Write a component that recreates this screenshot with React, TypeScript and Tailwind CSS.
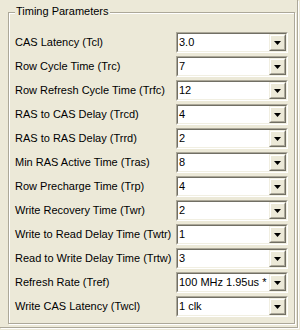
import React from "react";

const rows = [
  { label: "CAS Latency (Tcl)", value: "3.0" },
  { label: "Row Cycle Time (Trc)", value: "7" },
  { label: "Row Refresh Cycle Time (Trfc)", value: "12" },
  { label: "RAS to CAS Delay (Trcd)", value: "4" },
  { label: "RAS to RAS Delay (Trrd)", value: "2" },
  { label: "Min RAS Active Time (Tras)", value: "8" },
  { label: "Row Precharge Time (Trp)", value: "4" },
  { label: "Write Recovery Time (Twr)", value: "2" },
  { label: "Write to Read Delay Time (Twtr)", value: "1" },
  { label: "Read to Write Delay Time (Trtw)", value: "3" },
  { label: "Refresh Rate (Tref)", value: "100 MHz 1.95us *" },
  { label: "Write CAS Latency (Twcl)", value: "1 clk" },
];

const Combo = ({ value }: { value: string }) => {
  return (
    <div className="w-[112px] h-[21px] border border-t-[#aca899] border-l-[#aca899] border-r-white border-b-white">
      <div className="flex h-full border border-t-[#716f64] border-l-[#716f64] border-r-[#f1efe2] border-b-[#f1efe2] bg-white">
        <div className="flex-1 pl-[1px] leading-[17px] whitespace-nowrap overflow-hidden">{value}</div>
        {/* dropdown button */}
        <div className="w-[17px] h-[17px] border border-t-[#f1efe2] border-l-[#f1efe2] border-r-[#716f64] border-b-[#716f64]">
          <div className="flex items-center justify-center h-full border border-t-white border-l-white border-r-[#aca899] border-b-[#aca899] bg-[#ece9d8]">
            <svg width="7" height="4" viewBox="0 0 7 4" className="mt-[1px]">
              <path d="M0 0H7L3.5 4Z" fill="#000" />
            </svg>
          </div>
        </div>
      </div>
    </div>
  );
};

const App = () => {
  return (
    <div
      className="w-[300px] h-[330px] bg-[#ece9d8] text-black text-[11px]"
      style={{ fontFamily: '"Liberation Sans", Arial, sans-serif' }}
    >
      <div className="w-[298px] h-[328px] pl-[8px] pt-[12px] border-r border-b border-[#aca899] shadow-[1px_1px_0_#fff]">
        <div className="relative w-[287px] h-[312px] border border-[#aca899] shadow-[inset_1px_1px_0_#fff,1px_1px_0_#fff]">
          <span className="absolute left-[6px] -top-[8px] px-[1px] bg-[#ece9d8] leading-[13px]">
            Timing Parameters
          </span>
          <div className="flex flex-col gap-[3px] pl-[6px] pt-[19px]">
            {rows.map((row) => (
              <div key={row.label} className="flex items-center h-[21px]">
                <span className="w-[161px] whitespace-nowrap">{row.label}</span>
                <Combo value={row.value} />
              </div>
            ))}
          </div>
        </div>
      </div>
    </div>
  );
};

export default App;
